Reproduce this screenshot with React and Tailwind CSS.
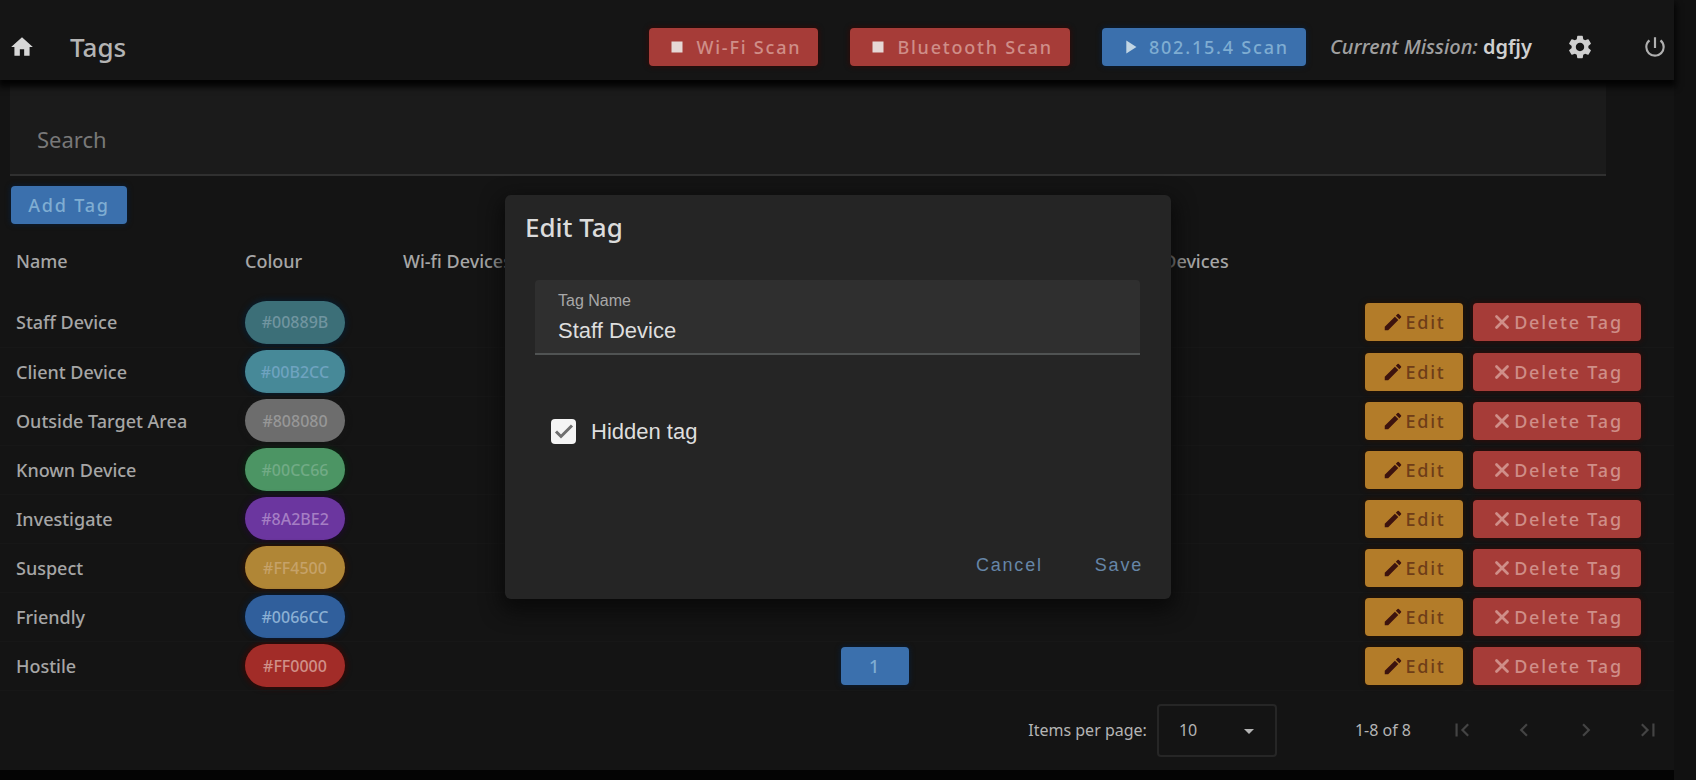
import { useState } from "react"
import { X } from "lucide-react"
import {
  MdArrowDropDown,
  MdChevronLeft,
  MdChevronRight,
  MdEdit,
  MdFirstPage,
  MdHome,
  MdLastPage,
  MdPlayArrow,
  MdPowerSettingsNew,
  MdSettings,
  MdStop,
} from "react-icons/md"

const TAGS = [
  { name: "Staff Device", colour: "#00889B", pill: "bg-[#3c6f78] text-[#7195a0] shadow-[#0a1c2b]" },
  { name: "Client Device", colour: "#00B2CC", pill: "bg-[#478998] text-[#6fa3c0] shadow-[#0a1c2b]" },
  { name: "Outside Target Area", colour: "#808080", pill: "bg-[#6d6d6d] text-[#979797] shadow-[#161616]" },
  { name: "Known Device", colour: "#00CC66", pill: "bg-[#4c9564] text-[#72ab86] shadow-[#0b2312]" },
  { name: "Investigate", colour: "#8A2BE2", pill: "bg-[#6b369f] text-[#a57ec4] shadow-[#1d0c2b]" },
  { name: "Suspect", colour: "#FF4500", pill: "bg-[#b08636] text-[#c6a269] shadow-[#2a1306]" },
  { name: "Friendly", colour: "#0066CC", pill: "bg-[#305f9c] text-[#8bb0d4] shadow-[#0a1a2e]" },
  { name: "Hostile", colour: "#FF0000", pill: "bg-[#a22c28] text-[#d09089] shadow-[#330a07]", bluetooth: 1 },
]

const BUTTON =
  "inline-flex h-[38px] items-center justify-center rounded text-lg font-medium tracking-widest shadow-[0_0_5px_1px]"
const RED = "bg-[#a63c38] text-[#cf8e88] shadow-[#300b08]"
const BLUE = "bg-[#3b70ad] text-[#7fadd2] shadow-[#0b1d33]"
const AMBER = "bg-[#b37c29] text-[#6e3d18] shadow-[#261204]"

function Header() {
  return (
    <header className="relative flex h-20 items-center bg-[#151515] pt-[14px] pr-[6px] pl-[9px] shadow-[0_5px_6px_2px_#040404]">
      <a href="#home" aria-label="Home" className="text-[#d6d6d6]">
        <MdHome size={26} />
      </a>
      <h1 className="ml-[35px] text-[26px] font-medium text-[#b4b4b4]">Tags</h1>
      <div className="ml-auto flex items-center gap-8">
        <button type="button" className={`${BUTTON} ${RED} gap-2 px-[17px]`}>
          <MdStop size={22} className="text-[#e6d8d6]" />
          Wi-Fi Scan
        </button>
        <button type="button" className={`${BUTTON} ${RED} gap-2 px-[17px]`}>
          <MdStop size={22} className="text-[#e6d8d6]" />
          Bluetooth Scan
        </button>
        <button type="button" className={`${BUTTON} ${BLUE} gap-2 px-[17px]`}>
          <MdPlayArrow size={22} className="text-[#c2d6e4]" />
          802.15.4 Scan
        </button>
      </div>
      <p className="ml-6 text-xl font-medium text-[#a0a0a0]">
        <em>Current Mission:</em> <strong className="font-semibold text-[#d0d0d0]">dgfjy</strong>
      </p>
      <button type="button" aria-label="Settings" className="ml-[34px] text-[#cfcfcf]">
        <MdSettings size={28} />
      </button>
      <button type="button" aria-label="Log out" className="ml-[48px] text-[#b0b0b0]">
        <MdPowerSettingsNew size={26} />
      </button>
    </header>
  )
}

function TagTable() {
  return (
    <table className="w-full table-fixed text-left text-lg font-medium text-[#a6a6a6]">
      <colgroup>
        <col className="w-[245px]" />
        <col className="w-[158px]" />
        <col className="w-[438px]" />
        <col className="w-[246px]" />
        <col />
        <col className="w-[310px]" />
      </colgroup>
      <thead>
        <tr className="h-[74px]">
          <th className="pl-4 font-medium">Name</th>
          <th className="font-medium">Colour</th>
          <th className="font-medium">Wi-fi Devices</th>
          <th className="font-medium">Bluetooth Devices</th>
          <th className="font-medium">802.15.4 Devices</th>
          <th aria-label="Actions" />
        </tr>
      </thead>
      <tbody>
        {TAGS.map((tag) => (
          <tr key={tag.name} className="h-[49px] border-b border-[#171717]">
            <td className="pl-4">{tag.name}</td>
            <td>
              <span
                className={`flex h-[43px] w-[100px] items-center justify-center rounded-full text-base shadow-[0_0_5px_2px] ${tag.pill}`}
              >
                {tag.colour}
              </span>
            </td>
            <td />
            <td>
              {tag.bluetooth && (
                <button type="button" className={`${BUTTON} ${BLUE} w-[68px]`}>
                  {tag.bluetooth}
                </button>
              )}
            </td>
            <td />
            <td>
              <div className="flex justify-end gap-[10px] pr-[33px]">
                <button type="button" className={`${BUTTON} ${AMBER} w-[98px] gap-px`}>
                  <MdEdit size={22} className="text-[#3d130e]" />
                  Edit
                </button>
                <button type="button" className={`${BUTTON} ${RED} w-[168px] gap-px`}>
                  <X size={22} strokeWidth={3} />
                  Delete Tag
                </button>
              </div>
            </td>
          </tr>
        ))}
      </tbody>
    </table>
  )
}

function Paginator() {
  return (
    <footer className="flex h-[79px] items-center justify-end pr-[13px] text-base text-[#b4b4b4]">
      <label htmlFor="page-size">Items per page:</label>
      <div className="relative ml-[10px]">
        <select
          id="page-size"
          defaultValue="10"
          className="h-[53px] w-[120px] appearance-none rounded border-2 border-[#262626] bg-transparent pl-5"
        >
          <option>10</option>
          <option>25</option>
          <option>50</option>
        </select>
        <MdArrowDropDown size={24} className="pointer-events-none absolute top-[15px] right-4" />
      </div>
      <span className="ml-[78px]">1-8 of 8</span>
      <div className="ml-[38px] flex gap-[36px] text-[#444444]">
        <button type="button" aria-label="First page" disabled>
          <MdFirstPage size={26} />
        </button>
        <button type="button" aria-label="Previous page" disabled>
          <MdChevronLeft size={26} />
        </button>
        <button type="button" aria-label="Next page" disabled>
          <MdChevronRight size={26} />
        </button>
        <button type="button" aria-label="Last page" disabled>
          <MdLastPage size={26} />
        </button>
      </div>
    </footer>
  )
}

function EditTagDialog() {
  const [name, setName] = useState("Staff Device")
  const [hidden, setHidden] = useState(true)

  return (
    <div className="absolute inset-0 flex items-center justify-center pt-[14px] pr-5">
      <form
        role="dialog"
        aria-labelledby="edit-tag-title"
        className="w-[666px] rounded-md bg-[#252525] px-5 pt-[14px] pb-4 font-['Liberation_Sans',Arial,sans-serif] shadow-[0_8px_20px_4px_#0a0a0a]"
      >
        <h2
          id="edit-tag-title"
          className="font-['Noto_Sans',sans-serif] text-[26px] leading-9 font-medium text-[#dcdcdc]"
        >
          Edit Tag
        </h2>
        <div className="mt-[35px] mr-[11px] ml-[10px] flex h-[75px] flex-col rounded-t border-b-2 border-[#505353] bg-[#2f2f2f] px-[23px] pt-[11px]">
          <label htmlFor="tag-name" className="text-base leading-5 text-[#a8a8a8]">
            Tag Name
          </label>
          <input
            id="tag-name"
            value={name}
            onChange={(event) => setName(event.target.value)}
            className="mt-1 w-full bg-transparent text-[22px] leading-8 text-[#dedede] outline-none"
          />
        </div>
        <div className="mt-[60px] ml-[26px] flex items-center gap-[15px] text-[22px] text-[#dedede]">
          <span className="relative flex">
            <input
              id="hidden-tag"
              type="checkbox"
              checked={hidden}
              onChange={(event) => setHidden(event.target.checked)}
              className="size-[25px] appearance-none rounded-sm bg-[#f4f4f4]"
            />
            {hidden && (
              <svg
                viewBox="0 0 25 25"
                className="pointer-events-none absolute inset-0 size-full"
                fill="none"
                stroke="#6f6f6f"
                strokeWidth="3"
              >
                <path d="M5 12.5l5 5L21 6.5" />
              </svg>
            )}
          </span>
          <label htmlFor="hidden-tag">Hidden tag</label>
        </div>
        <div className="mt-[99px] mr-2 flex justify-end gap-[52px] text-lg leading-9 tracking-widest text-[#6686a8]">
          <button type="button">Cancel</button>
          <button type="submit">Save</button>
        </div>
      </form>
    </div>
  )
}

export default function App() {
  return (
    <div className="relative min-h-screen bg-[#111111] pr-[22px] font-['Noto_Sans',sans-serif]">
      <div className="flex min-h-screen flex-col bg-[#040404]">
        <div className="bg-[#141414]">
          <Header />
          <main>
            <div className="mr-[68px] ml-[10px]">
              <input
                type="text"
                aria-label="Search"
                placeholder="Search"
                className="h-24 w-full border-b-2 border-[#303030] bg-[#1b1b1b] px-[27px] pt-6 text-[22px] text-[#a0a0a0] outline-none placeholder:text-[#787878]"
              />
            </div>
            <div className="mt-[10px] ml-[11px] flex">
              <button type="button" className={`${BUTTON} ${BLUE} w-[116px]`}>
                Add Tag
              </button>
            </div>
            <TagTable />
          </main>
          <Paginator />
        </div>
      </div>
      <EditTagDialog />
    </div>
  )
}
